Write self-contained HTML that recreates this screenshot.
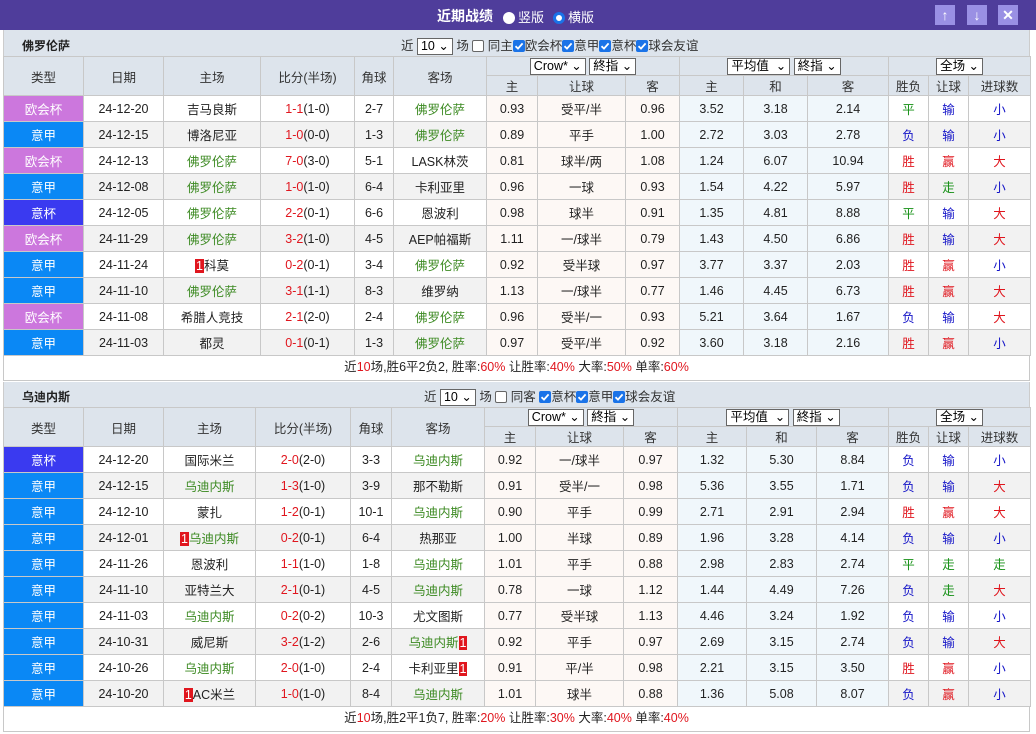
<!DOCTYPE html>
<html><head><meta charset="utf-8"><style>
*{box-sizing:border-box;margin:0;padding:0}
body{width:1036px;height:734px;background:#fff;font-family:"Liberation Sans","Noto Sans CJK SC",sans-serif;font-size:12.5px;color:#222;overflow:hidden;position:relative}
.top{height:30px;background:#4f3d9b;color:#fff;position:relative}
.top .t{position:absolute;left:437px;top:6px;font-weight:bold;font-size:14px}
.top .o{position:absolute;top:7px;font-size:13px}
.rd{display:inline-block;width:12px;height:12px;border-radius:50%;vertical-align:-2px;margin-right:3px}
.btn{position:absolute;top:5px;width:20px;height:20px;background:#9a90e4;color:#fff;text-align:center;line-height:20px;font-size:14px;font-weight:bold}
.sec{margin-left:3px;width:1027px;background:#dde4ec;height:26px;position:relative;border-left:1px solid #ccc;border-right:1px solid #ccc}
.sec .n{position:absolute;left:18px;top:7px;font-weight:bold;font-size:12px}
.sec .f{position:absolute;top:5px;font-size:12.5px;color:#333;white-space:nowrap}
.sel{display:inline-block;border:1px solid #666;background:#fff;padding:0 3px;height:17px;line-height:15px;font-size:12.5px;vertical-align:middle;color:#000}
.cb{display:inline-block;width:12px;height:12px;border:1px solid #666;background:#fff;border-radius:2px;vertical-align:-2px}
.cbc{display:inline-block;width:12px;height:12px;vertical-align:-2px}
table{border-collapse:collapse;margin-left:3px;width:1027px;table-layout:fixed}
td,th{border:1px solid #c8c8c8;text-align:center;font-weight:normal;white-space:nowrap;overflow:hidden}
thead td{background:#dde4ec;height:19px;color:#333}
tbody td{height:26px}
tbody tr:nth-child(even) td{background:#f2f2f2}
tbody td.c{background:#fdf8f5!important}
tbody td.a{background:#f0f7fb!important}
td.ok{background:#cc77dd!important;color:#fff}
td.yj{background:#0a88f5!important;color:#fff}
td.yb{background:#3a3af0!important;color:#fff}
.g{color:#3c8a22}.r{color:#e0161e}.b{color:#1515c8}.gn{color:#159015}
.n1{background:#e0161e;color:#fff;padding:0 1px}
.sum{margin-left:3px;width:1027px;height:25px;border:1px solid #c8c8c8;border-top:none;text-align:center;line-height:23px;font-size:12.5px}
.sum span{color:#e0161e}
</style></head><body>
<svg width="0" height="0" style="position:absolute"><symbol id="ck" viewBox="0 0 12 12"><rect width="12" height="12" rx="2" fill="#1a73e8"/><path d="M2.5 6.2 L5 8.6 L9.6 3.4" stroke="#fff" stroke-width="1.8" fill="none"/></symbol></svg>
<div class="top"><span class="t">近期战绩</span>
<span class="o" style="left:503px"><span class="rd" style="background:#fff"></span>竖版</span>
<span class="o" style="left:553px"><span class="rd" style="background:#fff;border:3px solid #1a73e8"></span>横版</span>
<span class="btn" style="left:935px">↑</span><span class="btn" style="left:967px">↓</span><span class="btn" style="left:998px">✕</span></div>

<div class="sec"><span class="n">佛罗伦萨</span><span class="f" style="left:397px">近 <span class="sel">10 ⌄</span> 场 <span class="cb"></span> 同主<svg class="cbc"><use href="#ck"/></svg>欧会杯<svg class="cbc"><use href="#ck"/></svg>意甲<svg class="cbc"><use href="#ck"/></svg>意杯<svg class="cbc"><use href="#ck"/></svg>球会友谊</span></div>
<table>
<colgroup><col style="width:80px"><col style="width:80px"><col style="width:97px"><col style="width:94px"><col style="width:39px"><col style="width:93px"><col style="width:51px"><col style="width:88px"><col style="width:54px"><col style="width:64px"><col style="width:64px"><col style="width:81px"><col style="width:40px"><col style="width:40px"><col style="width:62px"></colgroup>
<thead><tr><td rowspan="2">类型</td><td rowspan="2">日期</td><td rowspan="2">主场</td><td rowspan="2">比分(半场)</td><td rowspan="2">角球</td><td rowspan="2">客场</td><td colspan="3"><span class="sel">Crow* ⌄</span> <span class="sel">終指 ⌄</span></td><td colspan="3"><span class="sel">平均值 &nbsp;⌄</span> <span class="sel">終指 ⌄</span></td><td colspan="3"><span class="sel">全场 ⌄</span></td></tr>
<tr><td>主</td><td>让球</td><td>客</td><td>主</td><td>和</td><td>客</td><td>胜负</td><td>让球</td><td>进球数</td></tr></thead>
<tbody>
<tr><td class="ok">欧会杯</td><td>24-12-20</td><td>吉马良斯</td><td><span class="r">1-1</span>(1-0)</td><td>2-7</td><td class="g">佛罗伦萨</td><td class="c">0.93</td><td class="c">受平/半</td><td class="c">0.96</td><td class="a">3.52</td><td class="a">3.18</td><td class="a">2.14</td><td class="gn">平</td><td class="b">输</td><td class="b">小</td></tr>
<tr><td class="yj">意甲</td><td>24-12-15</td><td>博洛尼亚</td><td><span class="r">1-0</span>(0-0)</td><td>1-3</td><td class="g">佛罗伦萨</td><td class="c">0.89</td><td class="c">平手</td><td class="c">1.00</td><td class="a">2.72</td><td class="a">3.03</td><td class="a">2.78</td><td class="b">负</td><td class="b">输</td><td class="b">小</td></tr>
<tr><td class="ok">欧会杯</td><td>24-12-13</td><td class="g">佛罗伦萨</td><td><span class="r">7-0</span>(3-0)</td><td>5-1</td><td>LASK林茨</td><td class="c">0.81</td><td class="c">球半/两</td><td class="c">1.08</td><td class="a">1.24</td><td class="a">6.07</td><td class="a">10.94</td><td class="r">胜</td><td class="r">赢</td><td class="r">大</td></tr>
<tr><td class="yj">意甲</td><td>24-12-08</td><td class="g">佛罗伦萨</td><td><span class="r">1-0</span>(1-0)</td><td>6-4</td><td>卡利亚里</td><td class="c">0.96</td><td class="c">一球</td><td class="c">0.93</td><td class="a">1.54</td><td class="a">4.22</td><td class="a">5.97</td><td class="r">胜</td><td class="gn">走</td><td class="b">小</td></tr>
<tr><td class="yb">意杯</td><td>24-12-05</td><td class="g">佛罗伦萨</td><td><span class="r">2-2</span>(0-1)</td><td>6-6</td><td>恩波利</td><td class="c">0.98</td><td class="c">球半</td><td class="c">0.91</td><td class="a">1.35</td><td class="a">4.81</td><td class="a">8.88</td><td class="gn">平</td><td class="b">输</td><td class="r">大</td></tr>
<tr><td class="ok">欧会杯</td><td>24-11-29</td><td class="g">佛罗伦萨</td><td><span class="r">3-2</span>(1-0)</td><td>4-5</td><td>AEP帕福斯</td><td class="c">1.11</td><td class="c">一/球半</td><td class="c">0.79</td><td class="a">1.43</td><td class="a">4.50</td><td class="a">6.86</td><td class="r">胜</td><td class="b">输</td><td class="r">大</td></tr>
<tr><td class="yj">意甲</td><td>24-11-24</td><td><span class="n1">1</span>科莫</td><td><span class="r">0-2</span>(0-1)</td><td>3-4</td><td class="g">佛罗伦萨</td><td class="c">0.92</td><td class="c">受半球</td><td class="c">0.97</td><td class="a">3.77</td><td class="a">3.37</td><td class="a">2.03</td><td class="r">胜</td><td class="r">赢</td><td class="b">小</td></tr>
<tr><td class="yj">意甲</td><td>24-11-10</td><td class="g">佛罗伦萨</td><td><span class="r">3-1</span>(1-1)</td><td>8-3</td><td>维罗纳</td><td class="c">1.13</td><td class="c">一/球半</td><td class="c">0.77</td><td class="a">1.46</td><td class="a">4.45</td><td class="a">6.73</td><td class="r">胜</td><td class="r">赢</td><td class="r">大</td></tr>
<tr><td class="ok">欧会杯</td><td>24-11-08</td><td>希腊人竞技</td><td><span class="r">2-1</span>(2-0)</td><td>2-4</td><td class="g">佛罗伦萨</td><td class="c">0.96</td><td class="c">受半/一</td><td class="c">0.93</td><td class="a">5.21</td><td class="a">3.64</td><td class="a">1.67</td><td class="b">负</td><td class="b">输</td><td class="r">大</td></tr>
<tr><td class="yj">意甲</td><td>24-11-03</td><td>都灵</td><td><span class="r">0-1</span>(0-1)</td><td>1-3</td><td class="g">佛罗伦萨</td><td class="c">0.97</td><td class="c">受平/半</td><td class="c">0.92</td><td class="a">3.60</td><td class="a">3.18</td><td class="a">2.16</td><td class="r">胜</td><td class="r">赢</td><td class="b">小</td></tr>
</tbody></table>
<div class="sum">近<span>10</span>场,胜6平2负2, 胜率:<span>60%</span> 让胜率:<span>40%</span> 大率:<span>50%</span> 单率:<span>60%</span></div>

<div class="sec" style="margin-top:1px;height:25px"><span class="n" style="top:6px">乌迪内斯</span><span class="f" style="left:420px;top:4px">近 <span class="sel">10 ⌄</span> 场 <span class="cb"></span> 同客 <svg class="cbc"><use href="#ck"/></svg>意杯<svg class="cbc"><use href="#ck"/></svg>意甲<svg class="cbc"><use href="#ck"/></svg>球会友谊</span></div>
<table>
<colgroup><col style="width:80px"><col style="width:80px"><col style="width:92px"><col style="width:95px"><col style="width:41px"><col style="width:93px"><col style="width:51px"><col style="width:88px"><col style="width:54px"><col style="width:69px"><col style="width:70px"><col style="width:72px"><col style="width:40px"><col style="width:40px"><col style="width:62px"></colgroup>
<thead><tr><td rowspan="2">类型</td><td rowspan="2">日期</td><td rowspan="2">主场</td><td rowspan="2">比分(半场)</td><td rowspan="2">角球</td><td rowspan="2">客场</td><td colspan="3"><span class="sel">Crow* ⌄</span> <span class="sel">終指 ⌄</span></td><td colspan="3"><span class="sel">平均值 &nbsp;⌄</span> <span class="sel">終指 ⌄</span></td><td colspan="3"><span class="sel">全场 ⌄</span></td></tr>
<tr><td>主</td><td>让球</td><td>客</td><td>主</td><td>和</td><td>客</td><td>胜负</td><td>让球</td><td>进球数</td></tr></thead>
<tbody>
<tr><td class="yb">意杯</td><td>24-12-20</td><td>国际米兰</td><td><span class="r">2-0</span>(2-0)</td><td>3-3</td><td class="g">乌迪内斯</td><td class="c">0.92</td><td class="c">一/球半</td><td class="c">0.97</td><td class="a">1.32</td><td class="a">5.30</td><td class="a">8.84</td><td class="b">负</td><td class="b">输</td><td class="b">小</td></tr>
<tr><td class="yj">意甲</td><td>24-12-15</td><td class="g">乌迪内斯</td><td><span class="r">1-3</span>(1-0)</td><td>3-9</td><td>那不勒斯</td><td class="c">0.91</td><td class="c">受半/一</td><td class="c">0.98</td><td class="a">5.36</td><td class="a">3.55</td><td class="a">1.71</td><td class="b">负</td><td class="b">输</td><td class="r">大</td></tr>
<tr><td class="yj">意甲</td><td>24-12-10</td><td>蒙扎</td><td><span class="r">1-2</span>(0-1)</td><td>10-1</td><td class="g">乌迪内斯</td><td class="c">0.90</td><td class="c">平手</td><td class="c">0.99</td><td class="a">2.71</td><td class="a">2.91</td><td class="a">2.94</td><td class="r">胜</td><td class="r">赢</td><td class="r">大</td></tr>
<tr><td class="yj">意甲</td><td>24-12-01</td><td><span class="n1">1</span><span class="g">乌迪内斯</span></td><td><span class="r">0-2</span>(0-1)</td><td>6-4</td><td>热那亚</td><td class="c">1.00</td><td class="c">半球</td><td class="c">0.89</td><td class="a">1.96</td><td class="a">3.28</td><td class="a">4.14</td><td class="b">负</td><td class="b">输</td><td class="b">小</td></tr>
<tr><td class="yj">意甲</td><td>24-11-26</td><td>恩波利</td><td><span class="r">1-1</span>(1-0)</td><td>1-8</td><td class="g">乌迪内斯</td><td class="c">1.01</td><td class="c">平手</td><td class="c">0.88</td><td class="a">2.98</td><td class="a">2.83</td><td class="a">2.74</td><td class="gn">平</td><td class="gn">走</td><td class="gn">走</td></tr>
<tr><td class="yj">意甲</td><td>24-11-10</td><td>亚特兰大</td><td><span class="r">2-1</span>(0-1)</td><td>4-5</td><td class="g">乌迪内斯</td><td class="c">0.78</td><td class="c">一球</td><td class="c">1.12</td><td class="a">1.44</td><td class="a">4.49</td><td class="a">7.26</td><td class="b">负</td><td class="gn">走</td><td class="r">大</td></tr>
<tr><td class="yj">意甲</td><td>24-11-03</td><td class="g">乌迪内斯</td><td><span class="r">0-2</span>(0-2)</td><td>10-3</td><td>尤文图斯</td><td class="c">0.77</td><td class="c">受半球</td><td class="c">1.13</td><td class="a">4.46</td><td class="a">3.24</td><td class="a">1.92</td><td class="b">负</td><td class="b">输</td><td class="b">小</td></tr>
<tr><td class="yj">意甲</td><td>24-10-31</td><td>威尼斯</td><td><span class="r">3-2</span>(1-2)</td><td>2-6</td><td><span class="g">乌迪内斯</span><span class="n1">1</span></td><td class="c">0.92</td><td class="c">平手</td><td class="c">0.97</td><td class="a">2.69</td><td class="a">3.15</td><td class="a">2.74</td><td class="b">负</td><td class="b">输</td><td class="r">大</td></tr>
<tr><td class="yj">意甲</td><td>24-10-26</td><td class="g">乌迪内斯</td><td><span class="r">2-0</span>(1-0)</td><td>2-4</td><td>卡利亚里<span class="n1">1</span></td><td class="c">0.91</td><td class="c">平/半</td><td class="c">0.98</td><td class="a">2.21</td><td class="a">3.15</td><td class="a">3.50</td><td class="r">胜</td><td class="r">赢</td><td class="b">小</td></tr>
<tr><td class="yj">意甲</td><td>24-10-20</td><td><span class="n1">1</span>AC米兰</td><td><span class="r">1-0</span>(1-0)</td><td>8-4</td><td class="g">乌迪内斯</td><td class="c">1.01</td><td class="c">球半</td><td class="c">0.88</td><td class="a">1.36</td><td class="a">5.08</td><td class="a">8.07</td><td class="b">负</td><td class="r">赢</td><td class="b">小</td></tr>
</tbody></table>
<div class="sum">近<span>10</span>场,胜2平1负7, 胜率:<span>20%</span> 让胜率:<span>30%</span> 大率:<span>40%</span> 单率:<span>40%</span></div>
</body></html>
